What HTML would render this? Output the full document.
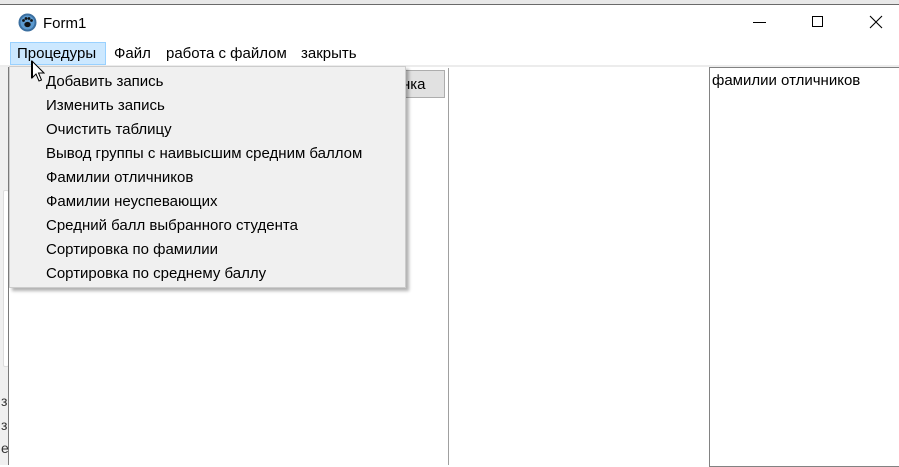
<!DOCTYPE html>
<html><head><meta charset="utf-8"><style>
*{margin:0;padding:0;box-sizing:border-box}
body{width:899px;height:465px;overflow:hidden;background:#fff;font-family:"Liberation Sans","DejaVu Sans",sans-serif;font-size:15px;color:#000;position:relative}
.a{position:absolute}
</style></head><body>
<div class="a" style="left:0;top:0;width:899px;height:4px;background:#e8e8e8"></div>
<div class="a" style="left:0;top:4px;width:899px;height:1px;background:#6a6a6a"></div>
<svg class="a" style="left:18px;top:13px" width="19" height="19" viewBox="0 0 19 19"><circle cx="9.5" cy="9.5" r="9" fill="#3b6fa0"/><circle cx="9.5" cy="9.5" r="7" fill="#5d9bd0"/><ellipse cx="9.5" cy="11.5" rx="3.2" ry="2.6" fill="#111"/><circle cx="5.5" cy="7.5" r="1.4" fill="#111"/><circle cx="8" cy="5.5" r="1.4" fill="#111"/><circle cx="11" cy="5.5" r="1.4" fill="#111"/><circle cx="13.5" cy="7.5" r="1.4" fill="#111"/></svg>
<div class="a" style="left:43px;top:15px;font-size:15px">Form1</div>
<div class="a" style="left:753px;top:22px;width:13px;height:1px;background:#000"></div>
<div class="a" style="left:812px;top:16px;width:11px;height:11px;border:1px solid #000"></div>
<svg class="a" style="left:869px;top:15px" width="14" height="14"><path d="M1 1L13 13M13 1L1 13" stroke="#000" stroke-width="1.1"/></svg>
<div class="a" style="left:10px;top:42px;width:96px;height:23px;background:#cce8ff;border:1px solid #99d1ff"></div>
<div class="a" style="left:17px;top:45px">Процедуры</div>
<div class="a" style="left:114px;top:45px">Файл</div>
<div class="a" style="left:166px;top:45px">работа с файлом</div>
<div class="a" style="left:301px;top:45px">закрыть</div>
<div class="a" style="left:0;top:65px;width:899px;height:2px;background:#ececec"></div>
<div class="a" style="left:0;top:67px;width:8px;height:398px;background:#f0f0f0"></div>
<div class="a" style="left:3px;top:190px;width:6px;height:177px;background:#fff;border:1px solid #ddd;border-radius:2px"></div>
<div class="a" style="left:8px;top:67px;width:1px;height:398px;background:#7a7a7a"></div>
<div class="a" style="left:1px;top:393px;font-size:14px;color:#333">з</div>
<div class="a" style="left:1px;top:417px;font-size:14px;color:#333">з</div>
<div class="a" style="left:1px;top:440px;font-size:14px;color:#333">е</div>
<div class="a" style="left:448px;top:68px;width:1px;height:397px;background:#a0a0a0"></div>
<div class="a" style="left:395px;top:70px;width:50px;height:28px;background:#e1e1e1;border:1px solid #adadad"></div>
<div class="a" style="left:402px;top:76px">нка</div>
<div class="a" style="left:709px;top:67px;width:191px;height:400px;border:1px solid #828282;background:#fff"></div>
<div class="a" style="left:712px;top:72px">фамилии отличников</div>
<div class="a" style="left:9px;top:66px;width:397px;height:222px;background:#f0f0f0;border:1px solid #ccc;box-shadow:3px 3px 3px rgba(0,0,0,.3)"></div>
<div class="a" style="left:46px;top:70px;line-height:24px">Добавить запись<br>Изменить запись<br>Очистить таблицу<br>Вывод группы с наивысшим средним баллом<br>Фамилии отличников<br>Фамилии неуспевающих<br>Средний балл выбранного студента<br>Сортировка по фамилии<br>Сортировка по среднему баллу</div>
<svg class="a" style="left:31px;top:60px" width="14" height="22"><path d="M1 1L1 18L5 14L8 21L10.5 20L7.5 13L13 13Z" fill="#fff" stroke="#000" stroke-width="1"/><path d="M1 1L1 18" stroke="#000" stroke-width="2"/></svg>
</body></html>
